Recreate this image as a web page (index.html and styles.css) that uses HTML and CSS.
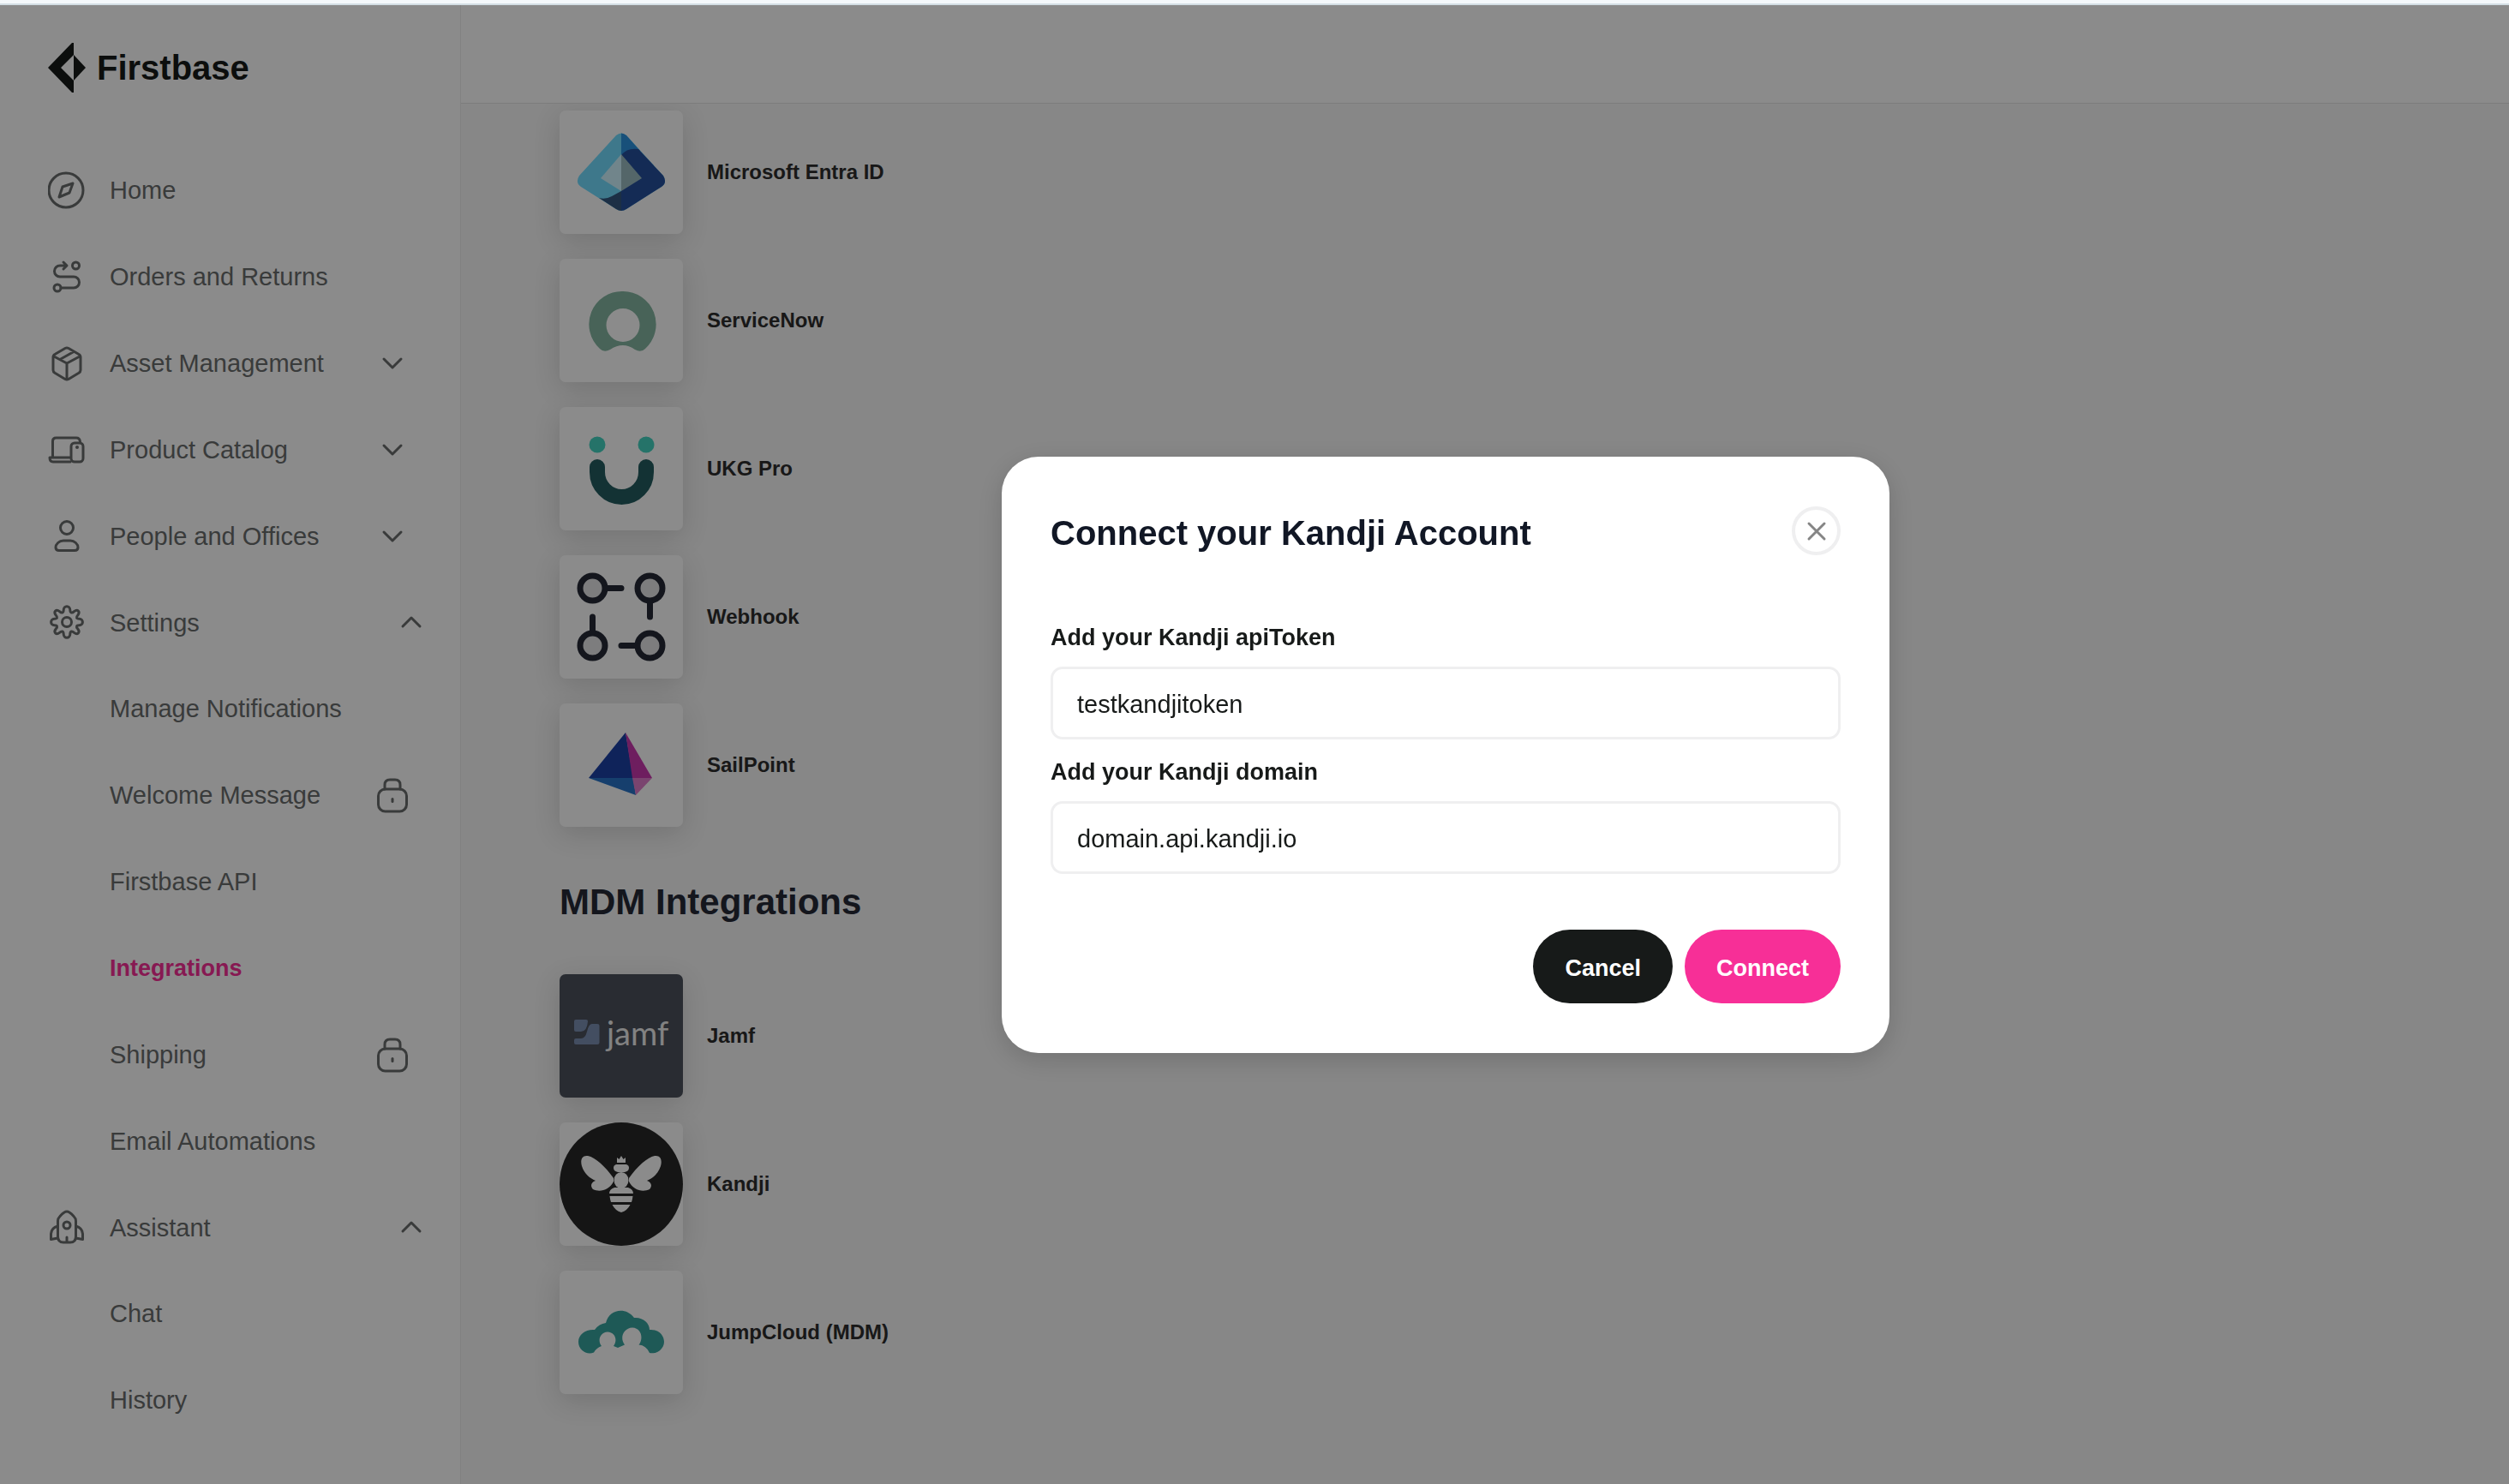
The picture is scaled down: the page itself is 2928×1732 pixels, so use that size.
FILE: index.html
```html
<!DOCTYPE html>
<html lang="en">
<head>
<meta charset="utf-8">
<meta name="viewport" content="width=device-width, initial-scale=1">
<title>Firstbase – Integrations</title>
<link rel="stylesheet" href="styles.css">
</head>
<body>
<div class="app">
  <aside class="sidebar">
    <a class="brand" href="#">
      <svg class="brand-mark" viewBox="0 0 44 58" aria-hidden="true"><path d="M30 0V14L15 29L30 44V58H28L0 29L28 0Z"/><path d="M30 14L44 29L30 44Z"/></svg>
      <span>Firstbase</span>
    </a>
    <nav>
      <ul class="nav">
        <li><a class="nav-row" href="#">
          <svg class="icon" viewBox="0 0 44 44" aria-hidden="true"><circle cx="21" cy="22" r="20"/><path d="M29 14L25 25L13 30L17 18Z"/></svg>
          <span>Home</span></a></li>
        <li><a class="nav-row" href="#">
          <svg class="icon" viewBox="0 0 44 44" aria-hidden="true"><path d="M20 9H14A6.500 6.500 0 0 0 14 22H30A6.500 6.500 0 0 1 30 35H15M18 5L22 9L18 13"/><circle cx="32.500" cy="9" r="4"/><circle cx="11" cy="35" r="4"/></svg>
          <span>Orders and Returns</span></a></li>
        <li><a class="nav-row" href="#">
          <svg class="icon" viewBox="0 0 44 44" aria-hidden="true"><path d="M20 4.500Q22 3.500 24 4.500L36 11.500Q38 12.500 38 15V30Q38 32 36 33.300L24 40.500Q22 41.500 20 40.500L8 33.300Q6 32 6 30V15Q6 12.500 8 11.500ZM7 14L22 22L37 14M22 22V41M14 17.500L30 8.500"/></svg>
          <span>Asset Management</span>
          <svg class="chevron" viewBox="0 0 44 24" aria-hidden="true"><path d="M12 7L22 17L32 7"/></svg></a></li>
        <li><a class="nav-row" href="#">
          <svg class="icon" viewBox="0 0 44 44" aria-hidden="true"><path d="M26 36H6Q2 36 2 31H26M5.500 31V12Q5.500 8 9.500 8H33Q37 8 37.500 12.500"/><rect x="27" y="14" width="14" height="22" rx="4"/><circle class="dot" cx="34" cy="19" r="2"/></svg>
          <span>Product Catalog</span>
          <svg class="chevron" viewBox="0 0 44 24" aria-hidden="true"><path d="M12 7L22 17L32 7"/></svg></a></li>
        <li><a class="nav-row" href="#">
          <svg class="icon" viewBox="0 0 44 44" aria-hidden="true"><circle cx="22" cy="12" r="7.500"/><path d="M18 27H26C31 27 35 31 35 35Q35 38.500 31 38.500H13Q9 38.500 9 35C9 31 13 27 18 27Z"/></svg>
          <span>People and Offices</span>
          <svg class="chevron" viewBox="0 0 44 24" aria-hidden="true"><path d="M12 7L22 17L32 7"/></svg></a></li>
        <li><a class="nav-row open" href="#">
          <svg class="icon" viewBox="0 0 44 44" aria-hidden="true"><circle cx="22" cy="22" r="5.500"/><path d="M18.200 8C18.200 2.300 25.800 2.300 25.800 8C26 11.500 28 12 30.500 9.600C34.500 6.500 38 10 34.800 14C32.500 16.500 33 18.200 36.500 18.200C41.700 18.200 41.700 25.800 36.500 25.800C33 25.800 32.500 27.500 34.800 30C38 34 34.500 37.500 30.500 34.400C28 32 26 32.500 25.800 36C25.800 41.700 18.200 41.700 18.200 36C18 32.500 16 32 13.500 34.400C9.500 37.500 6 34 9.200 30C11.500 27.500 11 25.800 7.500 25.800C2.300 25.800 2.300 18.200 7.500 18.200C11 18.200 11.500 16.500 9.200 14C6 10 9.500 6.500 13.500 9.600C16 12 18 11.500 18.200 8Z"/></svg>
          <span>Settings</span>
          <svg class="chevron" viewBox="0 0 44 24" aria-hidden="true"><path d="M12 17L22 7L32 17"/></svg></a>
          <ul class="subnav">
            <li><a class="nav-row" href="#"><span>Manage Notifications</span></a></li>
            <li><a class="nav-row" href="#"><span>Welcome Message</span>
              <svg class="lock" viewBox="0 0 44 44" aria-hidden="true"><path d="M13 15V10Q13 4 19 4H25Q31 4 31 10V15"/><rect x="5.500" y="15" width="33" height="26" rx="8"/><path d="M22 26.500V29.500"/></svg></a></li>
            <li><a class="nav-row" href="#"><span>Firstbase API</span></a></li>
            <li><a class="nav-row active" href="#" aria-current="page"><span>Integrations</span></a></li>
            <li><a class="nav-row" href="#"><span>Shipping</span>
              <svg class="lock" viewBox="0 0 44 44" aria-hidden="true"><path d="M13 15V10Q13 4 19 4H25Q31 4 31 10V15"/><rect x="5.500" y="15" width="33" height="26" rx="8"/><path d="M22 26.500V29.500"/></svg></a></li>
            <li><a class="nav-row" href="#"><span>Email Automations</span></a></li>
          </ul></li>
        <li><a class="nav-row open" href="#">
          <svg class="icon" viewBox="0 0 44 44" aria-hidden="true"><path d="M11.500 15Q11.500 12 14 9.500Q19 4 22 4Q25 4 30 9.500Q32.500 12 32.500 15V33Q32.500 40 26 40H18Q11.500 40 11.500 33ZM11.500 21Q4 23 3.500 30V36.500L11.500 35M32.500 21Q40 23 40.500 30V36.500L32.500 35M22 34V40"/><circle cx="22" cy="20" r="4"/></svg>
          <span>Assistant</span>
          <svg class="chevron" viewBox="0 0 44 24" aria-hidden="true"><path d="M12 17L22 7L32 17"/></svg></a>
          <ul class="subnav">
            <li><a class="nav-row" href="#"><span>Chat</span></a></li>
            <li><a class="nav-row" href="#"><span>History</span></a></li>
          </ul></li>
      </ul>
    </nav>
  </aside>

  <div class="page">
    <header class="topbar"></header>
    <main class="content">
      <ul class="integrations">
        <li class="integration">
          <svg class="tile" viewBox="0 0 144 144" aria-hidden="true">
            <path fill="#73dcff" d="M66 29Q72 24 78 29L121 76Q126 84 119 89L78 115Q72 119 66 115L25 89Q18 84 23 76Z"/>
            <path fill="#2d93e0" d="M72 26.500Q75 26.500 78 29L94 47L72 54Z"/>
            <path fill="#25509c" d="M72 52Q79 43 92 45L121 76Q126 84 119 89L78 115Q75 117 72 117Z"/>
            <path fill="#34567f" d="M46 102Q54 104 61 100L72 94V117Q69 117 66 115Z"/>
            <path fill="#cff5ff" d="M72 51V94L48 79Z"/><path fill="#9bbbc0" d="M72 51L96 79L72 94Z"/>
          </svg><span>Microsoft Entra ID</span></li>
        <li class="integration">
          <svg class="tile" viewBox="0 0 144 144" aria-hidden="true"><path fill="#84b6a1" fill-rule="evenodd" d="M74 38A38.500 38.500 0 0 1 100 105Q95 110 88 106Q74 96 59 106Q52 110 47 105A38.500 38.500 0 0 1 74 38ZM74 58A19.500 19.500 0 1 0 74 97A19.500 19.500 0 1 0 74 58Z"/></svg>
          <span>ServiceNow</span></li>
        <li class="integration">
          <svg class="tile" viewBox="0 0 144 144" aria-hidden="true"><circle cx="44" cy="44" r="9.500" fill="#45d3c1"/><circle cx="101" cy="44" r="9.500" fill="#45d3c1"/><path fill="none" stroke="#245d60" stroke-width="18" stroke-linecap="round" d="M44 70V76A28.500 29 0 0 0 101 76V70"/></svg>
          <span>UKG Pro</span></li>
        <li class="integration">
          <svg class="tile" viewBox="0 0 144 144" aria-hidden="true"><g fill="#e6e6e8" stroke="#252936" stroke-width="7" stroke-linecap="round"><circle cx="38.500" cy="38.500" r="14.500"/><circle cx="105.500" cy="38.500" r="14.500"/><circle cx="38.500" cy="105.500" r="14.500"/><circle cx="105.500" cy="105.500" r="14.500"/><path d="M54 38.500H72M105.500 54V72M38.500 90V72M90 105.500H72"/></g></svg>
          <span>Webhook</span></li>
        <li class="integration">
          <svg class="tile" viewBox="0 0 144 144" aria-hidden="true"><path fill="#1d40a6" d="M77 34L86 87H34Z"/><path fill="#ca37ae" d="M77 34L108 87H85Z"/><path fill="#2974c8" d="M34 87H86L89 107Z"/><path fill="#e07ecb" d="M85 87H108L89 107Z"/></svg>
          <span>SailPoint</span></li>
      </ul>
      <h2 class="section-title">MDM Integrations</h2>
      <ul class="integrations">
        <li class="integration">
          <svg class="tile tile-slate" viewBox="0 0 144 144" aria-hidden="true"><path fill="#7c8fb3" d="M19 53H31Q33 53 33 55Q32 67 25 67H19Q17 67 17 65V55Q17 53 19 53ZM38 58H44Q46.500 58 46.500 60V80Q46.500 82 44 82H19Q17 82 17 80V77Q17 75 19 75H25Q30 75 32 67Q34 58 38 58Z"/><text class="jamf-word" x="55" y="83">jamf</text></svg>
          <span>Jamf</span></li>
        <li class="integration">
          <svg class="tile" viewBox="0 0 144 144" aria-hidden="true"><circle cx="72" cy="72" r="72" fill="#282828"/><g fill="#fff"><path d="M67 41L69.500 43L72 39L74.500 43L77 41V47H67Z"/><path d="M66 49H78Q81 50 81 53Q81 57 76 58H68Q63 57 63 53Q63 50 66 49Z"/><ellipse cx="72" cy="67.500" rx="8.500" ry="9.500"/><path d="M63 65C53 51 42 41 33 39C26 38 24 44 26 51C29 60 35 65 42 68C36 70 36 75 39 78C47 82 58 79 63 69ZM81 65C91 51 102 41 111 39C118 38 120 44 118 51C115 60 109 65 102 68C108 70 108 75 105 78C97 82 86 79 81 69Z"/><path d="M64 76H80Q86 78 86 83H58Q58 78 64 76ZM58.500 86H85.500Q85 90 84 93H60Q59 90 58.500 86ZM61.500 96H82.500Q79 103 72 105Q65 103 61.500 96Z"/></g></svg>
          <span>Kandji</span></li>
        <li class="integration">
          <svg class="tile" viewBox="0 0 144 144" aria-hidden="true"><path fill="#38a39f" d="M40 95.500C32 99 22 93 22 83C22 74 31 68 41 69Q46 62 54 61C58 45 77 42 87 55C97 54 105 61 105 69C116 68 122 76 122 83C122 91 114 98 105 96Q101 87 92.500 86.500C98 80 96 67 85 66.500C74 67 70 79 76 86.500L68 90L63 88C68 81 65 72 56 71.500C47 72 44 82 49 88Q43 90 40 95.500Z"/></svg>
          <span>JumpCloud (MDM)</span></li>
      </ul>
    </main>
  </div>
</div>

<div class="overlay">
  <form class="modal" role="dialog" aria-modal="true" aria-labelledby="modal-title">
    <div class="modal-head">
      <h1 id="modal-title">Connect your Kandji Account</h1>
      <button class="close" type="button" aria-label="Close"><svg viewBox="0 0 24 24" aria-hidden="true"><path d="M3 3L21 21M21 3L3 21"/></svg></button>
    </div>
    <div class="field">
      <label for="api-token">Add your Kandji apiToken</label>
      <input id="api-token" type="text" value="testkandjitoken">
    </div>
    <div class="field">
      <label for="domain">Add your Kandji domain</label>
      <input id="domain" type="text" value="domain.api.kandji.io">
    </div>
    <div class="actions">
      <button class="btn btn-dark" type="button">Cancel</button>
      <button class="btn btn-pink" type="submit">Connect</button>
    </div>
  </form>
</div>
<div class="top-strip"></div>
</body>
</html>
```
FILE: styles.css
```css
:root {
  --ink: #171a19;
  --muted: #6a6c6c;
  --pink: #f72f97;
  --line: #efeff0;
}

* {
  box-sizing: border-box;
}

body {
  margin: 0;
  font-family: "Liberation Sans", Arial, sans-serif;
  font-size: 29px;
  color: var(--ink);
  background: #f7f7f7;
}

h1,
h2,
ul {
  margin: 0;
  padding: 0;
}

ul {
  list-style: none;
}

a {
  color: inherit;
  text-decoration: none;
}

.top-strip {
  position: fixed;
  inset: 0 0 auto;
  height: 6px;
  background: #f4f8fb;
  border-bottom: 2px solid #d3dee4;
}

.app {
  display: flex;
  height: 100vh;
  overflow: hidden;
}

/* Sidebar */

.sidebar {
  flex: none;
  width: 538px;
  padding-top: 50px;
  background: #fff;
  border-right: 1px solid #ececec;
}

.brand {
  display: flex;
  align-items: center;
  gap: 13px;
  height: 58px;
  padding-left: 56px;
  font-size: 40px;
  font-weight: 700;
}

.brand-mark {
  width: 44px;
  height: 58px;
  fill: currentColor;
}

.nav {
  padding-top: 63px;
  color: var(--muted);
}

.nav-row {
  display: flex;
  align-items: center;
  gap: 28px;
  height: 101px;
  padding: 0 57px 0 56px;
}

.nav-row span {
  padding-top: 2px;
}

.nav-row.open {
  height: 100px;
  padding-right: 35px;
}

.subnav .nav-row {
  padding-left: 128px;
}

.nav-row.active {
  color: var(--pink);
  font-size: 27px;
  font-weight: 700;
}

.icon,
.chevron,
.lock {
  flex: none;
  width: 44px;
  fill: none;
  stroke: currentColor;
  stroke-width: 3;
  stroke-linecap: round;
  stroke-linejoin: round;
}

.icon .dot {
  fill: currentColor;
  stroke: none;
}

.chevron,
.lock {
  margin-left: auto;
}

/* Content */

.page {
  flex: 1;
  display: flex;
  flex-direction: column;
  min-width: 0;
}

.topbar {
  flex: none;
  height: 121px;
  background: #fff;
  border-bottom: 1px solid #e4e4e4;
}

.content {
  flex: 1;
  min-height: 0;
  overflow: hidden;
  padding: 8px 115px;
}

.integrations {
  display: grid;
  gap: 29px;
}

.integration {
  display: flex;
  align-items: center;
  gap: 28px;
  font-size: 24px;
  font-weight: 700;
  color: #2c2c2c;
}

.tile {
  flex: none;
  width: 144px;
  height: 144px;
  border-radius: 7px;
  background: #fff;
  box-shadow: 0 8px 32px rgba(0, 0, 0, 0.14);
}

.tile-slate {
  background: #4c525d;
}

.jamf-word {
  font-family: Lato, sans-serif;
  font-size: 38px;
  font-weight: 400;
  fill: #eee;
}

.section-title {
  padding: 64px 0 60px;
  font-size: 42px;
  line-height: 48px;
  color: #252936;
}

/* Modal */

.overlay {
  position: fixed;
  inset: 0;
  display: flex;
  align-items: center;
  justify-content: center;
  padding: 30px 0 0 446px;
  background: rgba(0, 0, 0, 0.455);
}

.modal {
  width: 1036px;
  padding: 58px 57px;
  border-radius: 43px;
  background: #fff;
  box-shadow: 0 8px 32px rgba(0, 0, 0, 0.16);
}

.modal-head {
  display: flex;
  align-items: center;
  justify-content: space-between;
  margin-bottom: 78px;
}

.modal-head h1 {
  padding-top: 6px;
  font-size: 40px;
  color: #111725;
}

.close {
  display: grid;
  place-items: center;
  width: 57px;
  height: 57px;
  padding: 0;
  border: 4px solid var(--line);
  border-radius: 50%;
  background: #fff;
}

.close svg {
  width: 24px;
  height: 24px;
  fill: none;
  stroke: #858585;
  stroke-width: 3;
  stroke-linecap: round;
}

.field + .field {
  margin-top: 20px;
}

.field label {
  display: block;
  margin-bottom: 16px;
  font-size: 27px;
  font-weight: 700;
  line-height: 36px;
}

.field input {
  display: block;
  width: 100%;
  height: 85px;
  padding: 4px 28px 0;
  border: 3px solid var(--line);
  border-radius: 14px;
  font: inherit;
  color: inherit;
  background: #fff;
}

.actions {
  display: flex;
  justify-content: flex-end;
  gap: 14px;
  margin-top: 65px;
}

.btn {
  height: 86px;
  padding: 4px 37px 0;
  border: 0;
  border-radius: 43px;
  font: inherit;
  font-size: 27px;
  font-weight: 700;
  color: #fff;
}

.btn-dark {
  background: var(--ink);
}

.btn-pink {
  background: var(--pink);
}
```
